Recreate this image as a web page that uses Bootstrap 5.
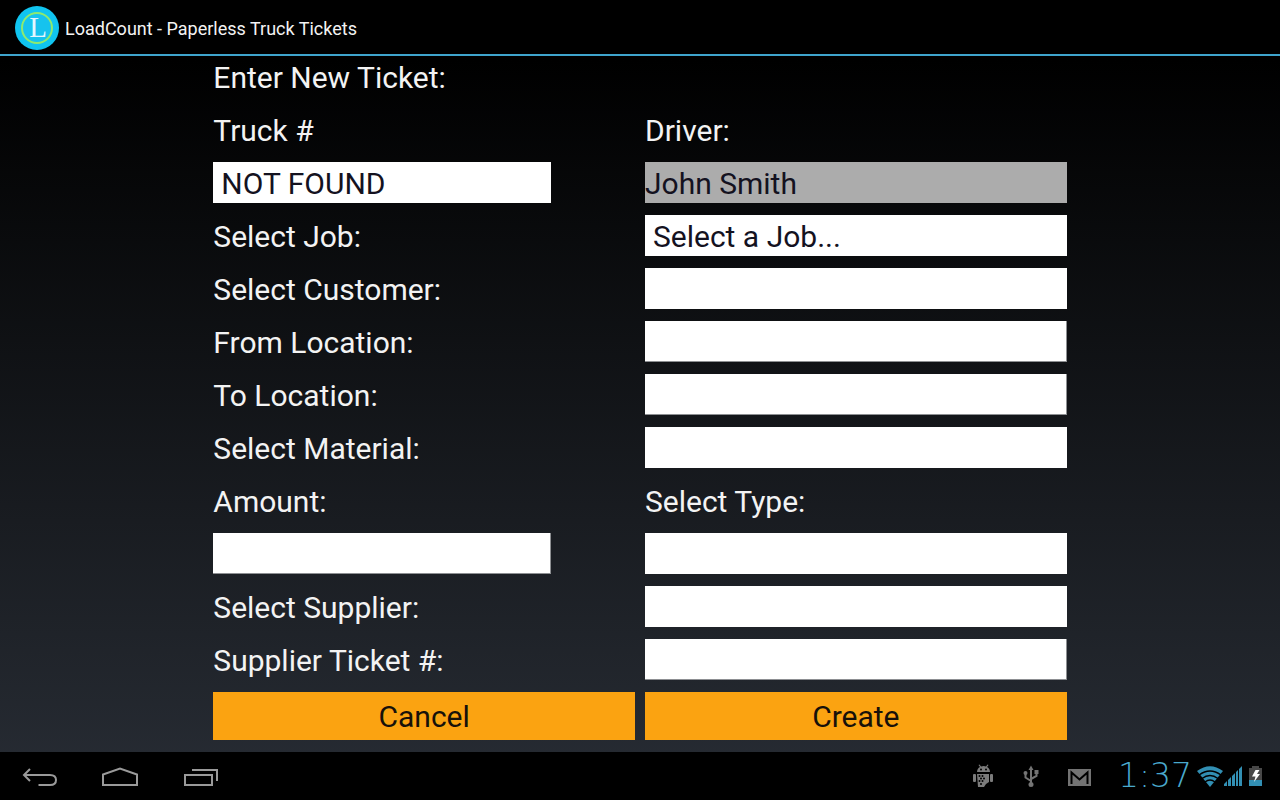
<!DOCTYPE html>
<html lang="en">
<head>
<meta charset="utf-8">
<meta name="viewport" content="width=device-width, initial-scale=1">
<title>LoadCount - Paperless Truck Tickets</title>
<link href="https://cdn.jsdelivr.net/npm/bootstrap@5.3.0/dist/css/bootstrap.min.css" rel="stylesheet">
<style>
  body { font-family: Roboto, "Liberation Sans", sans-serif; background: linear-gradient(#000 0, #000 60px, #282d35 100%); color: #f3f3f3; }
  .title-bar { height: 56px; background: #000; border-bottom: 2px solid #3fa4cc; font-size: 18px; padding: 2px 15px 0; gap: 6px; }
  .ticket-form { font-size: 30px; padding-bottom: 12px; }
  .ticket-form .row { --bs-gutter-x: 10px; margin-bottom: 12px; }
  .ticket-form .row:last-child { margin-bottom: 0; }
  .ticket-form label, .ticket-form h1 { display: block; height: 41px; font-size: 30px; font-weight: 400; line-height: 43px; margin: 0; }
  .field { display: block; width: 100%; height: 41px; border: 0; border-radius: 0; background: #fff; color: #14121f; padding: 2px 8px 0; font-size: 30px; line-height: 39px; appearance: none; }
  .field-typed { border: solid #8d8f92; border-width: 0 1px 1px 0; padding: 0 1px; }
  .field:disabled { background: #acacac; color: #14121f; opacity: 1; border: 0; padding: 2px 0 0; }
  .field-short { width: 80%; }
  .btn-ticket { --bs-btn-bg: #fba311; --bs-btn-color: #17110a; --bs-btn-hover-bg: #e8940a; --bs-btn-border-width: 0; --bs-btn-border-radius: 0; height: 48px; font-size: 30px; line-height: 46px; padding: 2px 0 0; }
  .system-bar { height: 48px; background: #000; }
  .nav-key { width: 80px; height: 48px; padding: 0; border: 0; background: none; }
  .status-icons { gap: 25px; padding-right: 16px; }
  .clock { font: 200 33px/48px "DejaVu Sans", sans-serif; color: #4aa9cd; }
</style>
</head>
<body class="d-flex flex-column min-vh-100">
<header class="title-bar d-flex align-items-center">
  <svg width="44" height="46" viewBox="0 0 44 46" aria-hidden="true">
    <circle cx="22" cy="23" r="22" fill="#10c4f0"/>
    <circle cx="22" cy="23" r="15" fill="#16c3ee" stroke="#8dea70" stroke-width="2"/>
    <text x="23" y="32" text-anchor="middle" font-family="Liberation Serif, serif" font-size="29" fill="#e4f6ff">L</text>
  </svg>
  <span>LoadCount - Paperless Truck Tickets</span>
</header>

<main class="flex-grow-1">
  <div class="row g-0 justify-content-center">
    <form class="ticket-form col-8">
      <div class="row"><div class="col-12"><h1>Enter New Ticket:</h1></div></div>
      <div class="row">
        <div class="col-6"><label for="truck">Truck #</label></div>
        <div class="col-6"><label for="driver">Driver:</label></div>
      </div>
      <div class="row">
        <div class="col-6"><select id="truck" class="field field-short"><option>NOT FOUND</option></select></div>
        <div class="col-6"><input id="driver" class="field" type="text" value="John Smith" disabled></div>
      </div>
      <div class="row">
        <div class="col-6"><label for="job">Select Job:</label></div>
        <div class="col-6"><select id="job" class="field"><option>Select a Job...</option></select></div>
      </div>
      <div class="row">
        <div class="col-6"><label for="customer">Select Customer:</label></div>
        <div class="col-6"><select id="customer" class="field"></select></div>
      </div>
      <div class="row">
        <div class="col-6"><label for="from">From Location:</label></div>
        <div class="col-6"><input id="from" class="field field-typed" type="text"></div>
      </div>
      <div class="row">
        <div class="col-6"><label for="to">To Location:</label></div>
        <div class="col-6"><input id="to" class="field field-typed" type="text"></div>
      </div>
      <div class="row">
        <div class="col-6"><label for="material">Select Material:</label></div>
        <div class="col-6"><select id="material" class="field"></select></div>
      </div>
      <div class="row">
        <div class="col-6"><label for="amount">Amount:</label></div>
        <div class="col-6"><label for="type">Select Type:</label></div>
      </div>
      <div class="row">
        <div class="col-6"><input id="amount" class="field field-typed field-short" type="text"></div>
        <div class="col-6"><select id="type" class="field"></select></div>
      </div>
      <div class="row">
        <div class="col-6"><label for="supplier">Select Supplier:</label></div>
        <div class="col-6"><select id="supplier" class="field"></select></div>
      </div>
      <div class="row">
        <div class="col-6"><label for="supplier-ticket">Supplier Ticket #:</label></div>
        <div class="col-6"><input id="supplier-ticket" class="field field-typed" type="text"></div>
      </div>
      <div class="row">
        <div class="col-6"><button type="button" class="btn btn-ticket d-block w-100">Cancel</button></div>
        <div class="col-6"><button type="button" class="btn btn-ticket d-block w-100">Create</button></div>
      </div>
    </form>
  </div>
</main>

<footer class="system-bar d-flex justify-content-between align-items-center">
  <nav class="d-flex" aria-label="System">
    <button type="button" class="nav-key" aria-label="Back">
      <svg class="d-block" width="80" height="48" fill="none" stroke="#9a9a9a" stroke-width="2"><path d="M30 17l-6 6 6 6M24 23h26q6 0 6 5t-6 5H38.500"/></svg>
    </button>
    <button type="button" class="nav-key" aria-label="Home">
      <svg class="d-block" width="80" height="48" fill="none" stroke="#9a9a9a" stroke-width="2"><path d="M23 33V22.500l17-6 17 6V33z"/></svg>
    </button>
    <button type="button" class="nav-key" aria-label="Recent apps">
      <svg class="d-block" width="80" height="48" fill="none" stroke="#9a9a9a" stroke-width="2"><path d="M25 23h27v10H25zM32 18h25v11"/></svg>
    </button>
  </nav>
  <div class="status-icons d-flex align-items-center">
    <svg width="28" height="24" viewBox="0 0 28 24" aria-label="Debugging connected" role="img">
      <g fill="#7b7b7b">
        <path d="M8 8c0-3 2-4.500 3-5L9.500 1l1-.5 1.500 2q3-.8 5 0l1.500-2 1 .5L18 3c1 .5 3 2 3 5z"/>
        <rect x="4" y="10" width="3" height="8" rx="1"/><rect x="21" y="10" width="3" height="8" rx="1"/>
        <path d="M8 10h12v8l-3 2-2 3H9z"/>
      </g>
      <g fill="#000"><circle cx="12" cy="5.500" r="1"/><circle cx="17" cy="5.500" r="1"/>
        <circle cx="10.500" cy="12" r="1"/><circle cx="13.500" cy="12" r="1"/><circle cx="12" cy="14.500" r="1"/><circle cx="15" cy="14.500" r="1"/><circle cx="10.500" cy="17" r="1"/><circle cx="13.500" cy="17" r="1"/><circle cx="12" cy="20" r="1"/></g>
    </svg>
    <svg width="18" height="24" viewBox="0 0 18 24" role="img" aria-label="USB connected">
      <g fill="none" stroke="#747474" stroke-width="2"><path d="M9 4v15M9 17L3.500 13.500V9M9 15l5.500-3V7"/></g>
      <g fill="#747474"><path d="M6.500 6L9 1.500 11.500 6z"/><circle cx="9" cy="20.500" r="2.500"/><circle cx="3.500" cy="9" r="2"/><rect x="12.500" y="6" width="4" height="4"/></g>
    </svg>
    <svg width="28" height="24" viewBox="0 0 28 24" role="img" aria-label="New mail">
      <path fill="#737373" d="M3 5h23v17H3z"/><path d="M6.500 20V8.500l8 7 8-7V20" fill="none" stroke="#000" stroke-width="2"/>
    </svg>
    <div class="d-flex align-items-center">
      <span class="clock">1:37</span>
      <svg width="72" height="24" viewBox="0 0 72 24" role="img" aria-label="Wi-Fi, signal and battery">
        <g transform="translate(0 1)">
          <path d="M5 6q13-9.500 26 0L18 22z" fill="#328fb3"/>
          <g fill="none" stroke="#000" stroke-width="1.500"><path d="M7 10q11-8 22 0M10 13.500q8-6 16 0M13 17q5-4 10 0"/></g>
          <g fill="#328fb3"><path d="M32 21v-2l3-3v5zM36 21v-6l3-3v9zM40 21V11l3-3v13zM44 21V7l2-2v16zM47 21V4l3-3v20z"/></g>
          <path d="M60 1h7v2h3v12H57V3h3z" fill="#484848"/><path d="M57 15h13v6H57z" fill="#328fb3"/>
          <path d="M63.500 5h4l-2.500 4h3l-6 8 1.500-5.500H60z" fill="#fff"/>
        </g>
      </svg>
    </div>
  </div>
</footer>
<script src="https://cdn.jsdelivr.net/npm/bootstrap@5.3.0/dist/js/bootstrap.bundle.min.js"></script>
</body>
</html>
